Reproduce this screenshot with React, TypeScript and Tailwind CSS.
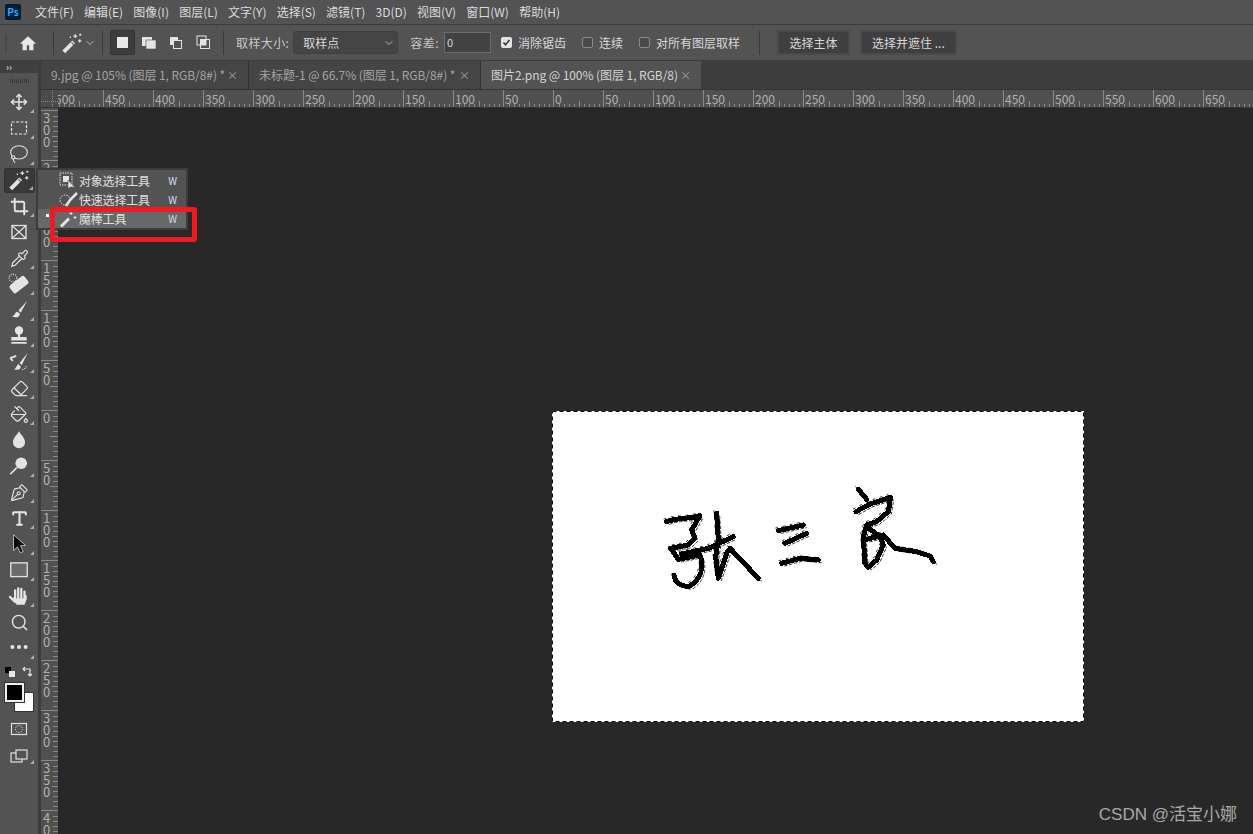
import type { ReactNode } from "react";
import {
  ChevronDown,
  Crop,
  Eraser,
  Lasso,
  Move,
  PaintBucket,
  PenTool,
  Pipette,
  Search,
  Type,
} from "lucide-react";

const FONT = "[font-family:'Noto_Sans_CJK_SC','Liberation_Sans',sans-serif]";

const MENUS = [
  "文件(F)",
  "编辑(E)",
  "图像(I)",
  "图层(L)",
  "文字(Y)",
  "选择(S)",
  "滤镜(T)",
  "3D(D)",
  "视图(V)",
  "窗口(W)",
  "帮助(H)",
];

const H_LABELS = [500, 450, 400, 350, 300, 250, 200, 150, 100, 50, 0, 50, 100, 150, 200, 250, 300, 350, 400, 450, 500, 550, 600, 650];
const V_LABELS = [300, 250, 200, 150, 100, 50, 0, 50, 100, 150, 200, 250, 300, 350, 400];

function Svg({ children, size = 22 }: { children: ReactNode; size?: number }) {
  return (
    <svg width={size} height={size} viewBox="0 0 20 20" fill="none" className="text-[#e4e4e4]">
      {children}
    </svg>
  );
}

function WandIcon() {
  return (
    <Svg>
      <path d="M2.500 18 11.500 9" stroke="currentColor" strokeWidth="3.600" />
      <path d="M9.500 9.500 12 12" stroke="#555" strokeWidth="1" />
      <path d="M13 2v3.500M11.200 3.700h3.600M17 6.500v3M15.500 8h3M17.500 1.500v2M16.500 2.500h2M8.500 4v1.500" stroke="currentColor" strokeWidth="1.100" />
    </Svg>
  );
}

const TOOLS: { icon: ReactNode; corner?: boolean; active?: boolean }[] = [
  { icon: <Move size={18} strokeWidth={2} color="#e4e4e4" />, corner: true },
  {
    icon: (
      <Svg size={20}>
        <rect x="2.500" y="4" width="15" height="12" stroke="currentColor" strokeWidth="1.200" strokeDasharray="3 1.500" />
      </Svg>
    ),
    corner: true,
  },
  { icon: <Lasso size={20} strokeWidth={1.300} color="#e4e4e4" />, corner: true },
  { icon: <WandIcon />, corner: true, active: true },
  { icon: <Crop size={19} strokeWidth={2.400} color="#e4e4e4" />, corner: true },
  {
    icon: (
      <Svg size={20}>
        <rect x="3" y="3.500" width="14" height="13" stroke="currentColor" strokeWidth="1.300" />
        <path d="M3 3.500 17 16.500M17 3.500 3 16.500" stroke="currentColor" strokeWidth="1.100" />
      </Svg>
    ),
  },
  { icon: <Pipette size={19} strokeWidth={1.500} color="#e4e4e4" />, corner: true },
  {
    icon: (
      <Svg>
        <rect x="1.500" y="6" width="17" height="9" rx="2" fill="currentColor" transform="rotate(-38 10 10.500)" />
        <path d="M8 11.500h.01M10.500 9.500h.01M10.500 13h.01M13 11h.01M12.500 7.500h.01" stroke="#444" strokeWidth="1.700" />
        <circle cx="4.500" cy="4.500" r="3.500" stroke="currentColor" strokeWidth="1" strokeDasharray="1 1" />
      </Svg>
    ),
    corner: true,
  },
  {
    icon: (
      <Svg>
        <path d="M17.500 1.500 9.500 10.500 11.500 12.500z" fill="currentColor" />
        <path d="M8.500 11.500c-2.500.5-2 3.500-5 4.500 3.500 1.500 7.500.5 7.300-2.700z" fill="currentColor" />
      </Svg>
    ),
    corner: true,
  },
  {
    icon: (
      <Svg>
        <circle cx="10" cy="5" r="3.800" fill="currentColor" />
        <path d="M9 8h2v3h6v3H3v-3h6zM3 15.500h14V17H3z" fill="currentColor" />
      </Svg>
    ),
    corner: true,
  },
  {
    icon: (
      <Svg>
        <path d="M18 1.500 10.500 11 12.500 12.800z" fill="currentColor" />
        <path d="M9.500 12c-1.800.4-1.500 3.500-4 4.500 3 1.200 6.500.4 6-2.700z" fill="currentColor" />
        <path d="M2 6.500 7.500 4.500M2 6.500l2.500 2.500" stroke="currentColor" strokeWidth="1.600" />
        <path d="M13 17c2-.5 3.500-2 4-4" stroke="currentColor" strokeWidth="1" strokeDasharray="1 1" />
      </Svg>
    ),
    corner: true,
  },
  { icon: <Eraser size={19} strokeWidth={1.500} color="#e4e4e4" />, corner: true },
  { icon: <PaintBucket size={19} strokeWidth={1.500} color="#e4e4e4" />, corner: true },
  {
    icon: (
      <Svg>
        <path d="M10 2c1.500 3 5.500 6 5.500 10a5.500 5.500 0 0 1-11 0c0-4 4-7 5.500-10z" fill="currentColor" />
      </Svg>
    ),
  },
  {
    icon: (
      <Svg>
        <circle cx="12" cy="7.500" r="5.300" fill="currentColor" />
        <path d="M8 11.500 2 17.500" stroke="currentColor" strokeWidth="1.600" />
      </Svg>
    ),
    corner: true,
  },
  { icon: <PenTool size={19} strokeWidth={1.400} color="#e4e4e4" className="rotate-[-90deg]" />, corner: true },
  { icon: <Type size={19} strokeWidth={2.600} color="#e4e4e4" />, corner: true },
  {
    icon: (
      <Svg>
        <path d="M5 1.500V16l3.700-3.400 2.500 5.400 2.600-1.200-2.500-5.200 4.700-.3z" fill="#0c0c0c" stroke="#d8d8d8" strokeWidth=".7" />
      </Svg>
    ),
    corner: true,
  },
  {
    icon: (
      <Svg>
        <rect x="2.500" y="3.500" width="15" height="12.500" fill="#6b6b6b" stroke="currentColor" strokeWidth="1.200" />
      </Svg>
    ),
    corner: true,
  },
  {
    icon: (
      <Svg>
        <path d="M5.500 10.500 4 13l4 5h7l2-5V9h-2v3H6z" fill="currentColor" />
        <path d="M1.800 10.800 6 15" stroke="currentColor" strokeWidth="2" strokeLinecap="round" />
        <path d="M6.500 12V5M9.300 12V3M12.100 12V3.500M15 12V6" stroke="currentColor" strokeWidth="2.100" strokeLinecap="round" />
      </Svg>
    ),
    corner: true,
  },
  { icon: <Search size={19} strokeWidth={1.800} color="#e4e4e4" /> },
  {
    icon: (
      <Svg>
        <circle cx="4" cy="9" r="1.800" fill="currentColor" />
        <circle cx="10" cy="9" r="1.800" fill="currentColor" />
        <circle cx="16" cy="9" r="1.800" fill="currentColor" />
      </Svg>
    ),
    corner: true,
  },
];

function Corner() {
  return (
    <svg width="4" height="4" viewBox="0 0 4 4" className="absolute bottom-[2px] right-[1px]">
      <path d="M4 0v4H0z" fill="#b0b0b0" />
    </svg>
  );
}

function ToolButton({ icon, corner, active }: { icon: ReactNode; corner?: boolean; active?: boolean }) {
  return (
    <div className="flex h-[26px] items-center justify-center">
      <div
        className={
          active
            ? "relative flex h-[25px] w-[31px] items-center justify-center rounded-[2px] border border-[#333] bg-[#393939]"
            : "relative flex h-[25px] w-[31px] items-center justify-center"
        }
      >
        {icon}
        {corner ? <Corner /> : null}
      </div>
    </div>
  );
}

function Toolbar() {
  return (
    <aside className="flex w-[41px] shrink-0 flex-col border-r-[3px] border-[#3c3c3c] bg-[#535353]">
      <div className="flex h-[12px] items-center bg-[#3f3f3f] pl-[6px] text-[9px] font-bold leading-none text-[#cfcfcf]">
        ››
      </div>
      <div className="flex h-[16px] items-center justify-center">
        <div className="h-[4px] w-[19px] bg-[repeating-linear-gradient(90deg,#3a3a3a_0,#3a3a3a_1px,transparent_1px,transparent_2px)]" />
      </div>
      {TOOLS.map((tool, i) => (
        <ToolButton key={i} {...tool} />
      ))}
      <div className="relative h-[52px]">
        <div className="absolute left-[5px] top-[6px] h-[6px] w-[6px] bg-black" />
        <div className="absolute left-[9px] top-[10px] h-[6px] w-[6px] bg-[#e8e8e8]" />
        <svg width="12" height="12" viewBox="0 0 12 12" fill="none" className="absolute left-[22px] top-[5px]">
          <path d="M1 3h7v6M1 3l2-2M1 3l2 2M8 10 6 8M8 10l2-2" stroke="#e4e4e4" strokeWidth="1.200" />
        </svg>
        <div className="absolute left-[14px] top-[31px] h-[20px] w-[20px] border border-[#333] bg-white" />
        <div className="absolute left-[5px] top-[22px] h-[19px] w-[19px] border-2 border-[#f0f0f0] bg-black outline outline-1 outline-[#333]" />
      </div>
      <div className="flex h-[26px] items-center justify-center pt-[6px]">
        <svg width="18" height="14" viewBox="0 0 18 14" fill="none">
          <rect x="1.500" y="1.500" width="15" height="11" stroke="#e0e0e0" strokeWidth="1.200" />
          <circle cx="9" cy="7" r="3.500" stroke="#e0e0e0" strokeDasharray="1.200 1.200" />
        </svg>
      </div>
      <div className="relative mt-[4px] flex h-[26px] items-center justify-center">
        <svg width="18" height="14" viewBox="0 0 18 14" fill="none">
          <rect x="1" y="4" width="11" height="9" stroke="#e0e0e0" strokeWidth="1.200" />
          <rect x="6" y="1" width="11" height="9" fill="#535353" stroke="#e0e0e0" strokeWidth="1.200" />
        </svg>
        <div className="absolute bottom-[5px] right-[4px] h-0 w-0 border-b-[4px] border-l-[4px] border-b-[#b0b0b0] border-l-transparent" />
      </div>
    </aside>
  );
}

function Divider({ className }: { className: string }) {
  return <div className={`h-[24px] w-px shrink-0 bg-[#3a3a3a] ${className}`} />;
}

function Check({ label, checked, className }: { label: string; checked?: boolean; className: string }) {
  return (
    <div className={`flex items-center gap-[6px] ${className}`}>
      <div
        className={
          checked
            ? "flex h-[11px] w-[11px] items-center justify-center rounded-[2px] bg-[#e4e4e4]"
            : "h-[11px] w-[11px] rounded-[2px] border border-[#8a8a8a] bg-[#4a4a4a]"
        }
      >
        {checked ? (
          <svg width="9" height="9" viewBox="0 0 9 9" fill="none">
            <path d="M1.500 4.500 3.500 6.800 7.500 2" stroke="#333" strokeWidth="1.500" />
          </svg>
        ) : null}
      </div>
      <span className="whitespace-nowrap">{label}</span>
    </div>
  );
}

function SelectionMode({ children, active }: { children: ReactNode; active?: boolean }) {
  return (
    <div
      className={
        active
          ? "flex h-[25px] w-[25px] items-center justify-center rounded-[2px] border border-[#333] bg-[#3c3c3c]"
          : "flex h-[25px] w-[26px] items-center justify-center"
      }
    >
      {children}
    </div>
  );
}

function OptionsBar() {
  return (
    <div className="flex h-[36px] shrink-0 items-center border-b border-[#3c3c3c] bg-[#535353] text-[12px] text-[#d8d8d8]">
      <div className="ml-[5px] h-[18px] w-[2px] bg-[repeating-linear-gradient(0deg,#3f3f3f_0,#3f3f3f_1px,transparent_1px,transparent_2px)]" />
      <svg width="18" height="18" viewBox="0 0 20 20" className="ml-[12px]">
        <path d="M10 2.500 1 10.800h3V18h4.700v-5.500h2.600V18H16v-7.200h3z" fill="#e8e8e8" />
      </svg>
      <Divider className="ml-[16px]" />
      <div className="ml-[7px]">
        <WandIcon />
      </div>
      <ChevronDown size={12} color="#b8b8b8" className="ml-[1px]" />
      <Divider className="ml-[6px]" />
      <div className="ml-[7px] flex items-center gap-[1px]">
        <SelectionMode active>
          <div className="h-[11px] w-[11px] bg-[#e8e8e8]" />
        </SelectionMode>
        <SelectionMode>
          <svg width="16" height="14" viewBox="0 0 16 14">
            <rect x="1" y="1" width="10" height="9" fill="#e4e4e4" />
            <rect x="5" y="4" width="10" height="9" fill="#e4e4e4" stroke="#535353" strokeWidth=".6" />
          </svg>
        </SelectionMode>
        <SelectionMode>
          <svg width="14" height="14" viewBox="0 0 14 14" fill="none">
            <rect x="1" y="1" width="8" height="8" fill="#e4e4e4" />
            <rect x="4.500" y="4.500" width="8" height="8" fill="#535353" stroke="#e4e4e4" />
          </svg>
        </SelectionMode>
        <SelectionMode>
          <svg width="15" height="15" viewBox="0 0 15 15" fill="none">
            <rect x="1" y="1" width="9" height="9" stroke="#e4e4e4" />
            <rect x="4.500" y="4.500" width="9" height="9" stroke="#e4e4e4" />
            <rect x="4.500" y="4.500" width="5.500" height="5.500" fill="#e4e4e4" />
          </svg>
        </SelectionMode>
      </div>
      <Divider className="ml-[7px]" />
      <span className="ml-[12px] whitespace-nowrap tracking-[0.4px] text-[#c8c8c8]">取样大小:</span>
      <div className="ml-[4px] flex h-[23px] w-[105px] items-center justify-between rounded-[3px] border border-[#404040] bg-[#454545] pl-[9px] pr-[2px]">
        <span>取样点</span>
        <ChevronDown size={12} color="#b8b8b8" />
      </div>
      <span className="ml-[12px] whitespace-nowrap tracking-[0.4px] text-[#c8c8c8]">容差:</span>
      <div className="ml-[5px] flex h-[21px] w-[47px] items-center border border-[#6c6c6c] bg-[#424242] pl-[2px] text-[11px]">0</div>
      <Check label="消除锯齿" checked className="ml-[10px]" />
      <Check label="连续" className="ml-[16px]" />
      <Check label="对所有图层取样" className="ml-[16px]" />
      <Divider className="ml-[19px]" />
      <div className="ml-[17px] flex h-[25px] w-[73px] items-center justify-center rounded-[2px] border-2 border-[#4a4a4a] bg-[#3f3f3f]">选择主体</div>
      <div className="ml-[10px] flex h-[25px] w-[97px] items-center justify-center rounded-[2px] border-2 border-[#4a4a4a] bg-[#3f3f3f]">选择并遮住 ...</div>
    </div>
  );
}

function Tab({ label, active, className }: { label: string; active?: boolean; className: string }) {
  return (
    <div
      className={`flex h-full shrink-0 items-center justify-between px-[10px] text-[12px] tracking-[-0.06px] ${className} ${
        active ? "bg-[#535353] text-[#d4d4d4]" : "border-r border-[#333] bg-[#454545] text-[#a4a4a4]"
      }`}
    >
      <span className="whitespace-nowrap">{label}</span>
      <span className="text-[11px] leading-none text-[#a0a0a0]">×</span>
    </div>
  );
}

function HTicks() {
  return (
    <svg width="50" height="18" className="absolute left-0 top-0">
      {[5, 10, 15, 20, 25, 30, 35, 40, 45].map((x) => (
        <line key={x} x1={x + 0.5} x2={x + 0.5} y1={x === 25 ? 11 : 14} y2="18" stroke="#8a8a8a" />
      ))}
    </svg>
  );
}

function HRuler() {
  return (
    <div className="flex h-[18px] shrink-0 border-b border-[#333] bg-[#505050]">
      <div className="relative h-full w-[17px] shrink-0 bg-[#4b4b4b]">
        <div className="absolute left-0 top-[11px] w-full border-t border-dotted border-[#8a8a8a]" />
        <div className="absolute left-[11px] top-0 h-full border-l border-dotted border-[#8a8a8a]" />
      </div>
      <div className="flex min-w-0 flex-1 overflow-hidden">
        <div className="ml-[-5px] flex">
          {H_LABELS.map((n, i) => (
            <div key={i} className="relative h-[17px] w-[50px] shrink-0 border-l border-[#8a8a8a]">
              <HTicks />
              <span className="absolute left-[1px] top-[1px] text-[12px] leading-[16px] text-[#b0b0b0]">{n}</span>
            </div>
          ))}
        </div>
      </div>
    </div>
  );
}

function VRuler() {
  return (
    <div className="flex w-[17px] shrink-0 flex-col overflow-hidden bg-[#505050] pt-[2px]">
      {V_LABELS.map((n, i) => (
        <div key={i} className="relative h-[50px] w-full shrink-0 border-t border-[#8a8a8a]">
          <svg width="17" height="50" className="absolute left-0 top-0">
            {[5, 10, 15, 20, 25, 30, 35, 40, 45].map((y) => (
              <line key={y} x1={y === 25 ? 9 : 12} x2="17" y1={y + 0.5} y2={y + 0.5} stroke="#8a8a8a" />
            ))}
          </svg>
          <div className="absolute left-[2px] top-[1px] w-[9px] break-all bg-[#505050] text-[13px] leading-[12px] text-[#b0b0b0]">{n}</div>
        </div>
      ))}
    </div>
  );
}

const STROKES = [
  "M50 125C80 112 120 118 150 107L125 150 135 175 115 195 62 205 85 238 150 225C162 260 155 295 120 318 95 322 75 310 72 285",
  "M200 100 205 180 197 230 205 295 232 215",
  "M95 222 175 205 250 170",
  "M240 205 325 295",
  "M385 152 460 135",
  "M405 190 470 160",
  "M395 250 450 235 505 240",
  "M625 28 650 58",
  "M618 95 660 72 722 52 715 95 680 125 650 135 640 170 645 250 655 262 680 240 700 195 690 170 650 140",
  "M650 178 700 165 735 205 800 215 840 228 850 245",
];

function Document() {
  return (
    <div className="ml-[494px] mt-[303px] h-[311px] w-[532px] bg-white">
      <svg width="532" height="311" viewBox="0 0 532 311" fill="none">
        <rect x="0.500" y="0.500" width="531" height="310" stroke="#000" strokeDasharray="4 3" />
        <g transform="translate(98 69) scale(0.3333)" strokeLinejoin="round" strokeLinecap="round" shapeRendering="crispEdges">
          <g transform="translate(9 8)" stroke="#333" strokeWidth="3" strokeDasharray="8 7">
            {STROKES.map((d) => (
              <path key={d} d={d} />
            ))}
          </g>
          <g transform="translate(-8 -8)" stroke="#333" strokeWidth="3" strokeDasharray="6 16">
            {STROKES.map((d) => (
              <path key={d} d={d} />
            ))}
          </g>
          {STROKES.map((d) => (
            <path key={d} d={d} stroke="#000" strokeWidth="15" />
          ))}
        </g>
      </svg>
    </div>
  );
}

function Flyout() {
  const rows = [
    {
      label: "对象选择工具",
      icon: (
        <svg width="18" height="18" viewBox="0 0 18 18" fill="none">
          <rect x="1" y="1" width="12" height="12" stroke="#e4e4e4" strokeDasharray="1.500 1" />
          <rect x="4" y="4" width="6" height="6" fill="#e4e4e4" />
          <path d="M9 8v9l2.500-2 4.500 .5z" fill="#e4e4e4" stroke="#333" strokeWidth=".5" />
        </svg>
      ),
    },
    {
      label: "快速选择工具",
      icon: (
        <svg width="20" height="18" viewBox="0 0 20 18" fill="none">
          <circle cx="6" cy="9" r="5" stroke="#e4e4e4" strokeDasharray="1.500 1.200" />
          <path d="M18 2 11 9 7 15" stroke="#e4e4e4" strokeWidth="2.600" />
        </svg>
      ),
    },
    {
      label: "魔棒工具",
      active: true,
      icon: (
        <svg width="20" height="18" viewBox="0 0 20 18" fill="none">
          <path d="M2 16.500 10 8.500" stroke="#e4e4e4" strokeWidth="3" />
          <path d="M12 2v3M10.500 3.500h3M16 6v3M14.500 7.500h3" stroke="#e4e4e4" />
        </svg>
      ),
    },
  ];
  return (
    <div className="absolute left-[36px] top-[168px] flex h-[62px] w-[152px] flex-col border-2 border-[#3c3c3c] bg-[#535353] pt-[1px] text-[12px] leading-none text-[#e0e0e0]">
      {rows.map((row) => (
        <div
          key={row.label}
          className={`flex h-[19px] items-center pl-[21px] ${row.active ? "bg-[#686868]" : ""}`}
        >
          <div className="w-[20px] shrink-0">{row.icon}</div>
          <span className="whitespace-nowrap tracking-[-0.2px]">{row.label}</span>
          <span className="ml-auto pr-[9px] text-[10px] text-[#d4dcec]">W</span>
        </div>
      ))}
      <div className="absolute left-[8px] top-[44px] h-[3px] w-[3px] bg-white" />
    </div>
  );
}

export default function App() {
  return (
    <div className={`relative flex h-[834px] w-[1253px] flex-col overflow-hidden bg-[#535353] ${FONT}`}>
      <div className="flex h-[25px] shrink-0 items-center border-b border-[#3c3c3c] bg-[#535353]">
        <div className="ml-[5px] flex h-[16px] w-[16px] items-center justify-center rounded-[2px] bg-[#001e36] text-[10px] font-bold leading-none text-[#31a8ff]">
          Ps
        </div>
        <div className="ml-[14px] flex items-center gap-[10.200px] text-[12px] text-[#dcdcdc]">
          {MENUS.map((m) => (
            <span key={m} className="whitespace-nowrap">
              {m}
            </span>
          ))}
        </div>
      </div>
      <OptionsBar />
      <div className="flex min-h-0 flex-1">
        <Toolbar />
        <div className="flex min-w-0 flex-1 flex-col">
          <div className="flex h-[29px] shrink-0 border-b border-[#333] bg-[#3e3e3e]">
            <Tab label="9.jpg @ 105% (图层 1, RGB/8#) *" className="w-[208px]" />
            <Tab label="未标题-1 @ 66.7% (图层 1, RGB/8#) *" className="w-[232px]" />
            <Tab label="图片2.png @ 100% (图层 1, RGB/8)" active className="w-[220px]" />
          </div>
          <HRuler />
          <div className="flex min-h-0 flex-1">
            <VRuler />
            <main className="min-w-0 flex-1 overflow-hidden bg-[#282828]">
              <Document />
            </main>
          </div>
        </div>
      </div>
      <Flyout />
      <div className="absolute left-[50px] top-[207px] h-[35px] w-[147px] rounded-[3px] border-[5px] border-[#ed1c24]" />
      <div className="absolute bottom-[7px] right-[16px] text-[17px] leading-[24px] text-[#a8a8a8] [font-family:'Liberation_Sans','Noto_Sans_CJK_SC',sans-serif]">
        CSDN @活宝小娜
      </div>
    </div>
  );
}
